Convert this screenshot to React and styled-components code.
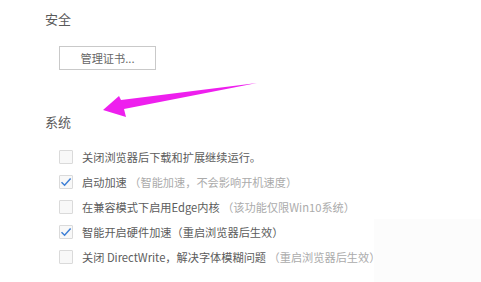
import React from "react";
import styled, { createGlobalStyle } from "styled-components";

const GlobalStyle = createGlobalStyle`
  html, body {
    margin: 0;
    padding: 0;
    background: #fff;
  }
  body {
    font-family: "Noto Sans CJK SC", "Microsoft YaHei", sans-serif;
    -webkit-font-smoothing: antialiased;
  }
`;

const Page = styled.div`
  position: relative;
  width: 481px;
  height: 282px;
  overflow: hidden;
  padding-left: 45px;
  box-sizing: border-box;
  display: flex;
  flex-direction: column;
`;

const SectionTitle = styled.div`
  font-size: 13px;
  line-height: 20px;
  color: #5a5a5a;
  margin-top: ${(p) => p.$top}px;
`;

const Button = styled.button`
  margin-top: 17px;
  margin-left: 14px;
  width: 97px;
  height: 24px;
  box-sizing: border-box;
  border: 1px solid #c9c9c9;
  background: #fff;
  color: #666;
  font-family: inherit;
  font-size: 11.2px;
  padding: 0;
  display: flex;
  align-items: center;
  justify-content: center;
`;

const List = styled.div`
  margin-top: 12px;
  display: flex;
  flex-direction: column;
`;

const Row = styled.label`
  height: 25px;
  display: flex;
  align-items: center;
  gap: 9px;
  padding-left: 14px;
  white-space: nowrap;
  font-size: 11.2px;
  color: #5c5c5c;
`;

const Box = styled.span`
  width: 14px;
  height: 14px;
  box-sizing: border-box;
  border: 1px solid #dadada;
  background: #f8f8f8;
  border-radius: 1px;
  display: flex;
  align-items: center;
  justify-content: center;
  flex-shrink: 0;
`;

const Hint = styled.span`
  color: #ababab;
`;

const Fade = styled.div`
  position: absolute;
  left: 374px;
  top: 219px;
  width: 107px;
  height: 63px;
  background: #fcfcfc;
`;

const Arrow = styled.svg`
  position: absolute;
  left: 0;
  top: 0;
  pointer-events: none;
`;

function Check({ checked }) {
  return (
    <Box>
      {checked && (
        <svg width="12" height="10" viewBox="0 0 12 10">
          <path
            d="M1.5 5.2 L4.6 8.2 L10.6 1.4"
            fill="none"
            stroke="#3d7fd6"
            strokeWidth="1.5"
          />
        </svg>
      )}
    </Box>
  );
}

const options = [
  { checked: false, label: "关闭浏览器后下载和扩展继续运行。" },
  { checked: true, label: "启动加速", hint: " （智能加速，不会影响开机速度）" },
  { checked: false, label: "在兼容模式下启用Edge内核", hint: " （该功能仅限Win10系统）" },
  { checked: true, label: "智能开启硬件加速（重启浏览器后生效）" },
  { checked: false, label: "关闭 DirectWrite，解决字体模糊问题", hint: " （重启浏览器后生效）" },
];

export default function App() {
  return (
    <>
      <GlobalStyle />
      <Page>
        <SectionTitle $top={9}>安全</SectionTitle>
        <div>
          <Button>管理证书...</Button>
        </div>
        <SectionTitle $top={42}>系统</SectionTitle>
        <List>
          {options.map((o, i) => (
            <Row key={i}>
              <Check checked={o.checked} />
              <span>
                {o.label}
                {o.hint && <Hint>{o.hint}</Hint>}
              </span>
            </Row>
          ))}
        </List>
        <Fade />
        <Arrow width="481" height="282" viewBox="0 0 481 282">
          <polygon
            points="103,110 119,96 121,100 257,83 124,109 126,117"
            fill="#ee1fee"
          />
        </Arrow>
      </Page>
    </>
  );
}
